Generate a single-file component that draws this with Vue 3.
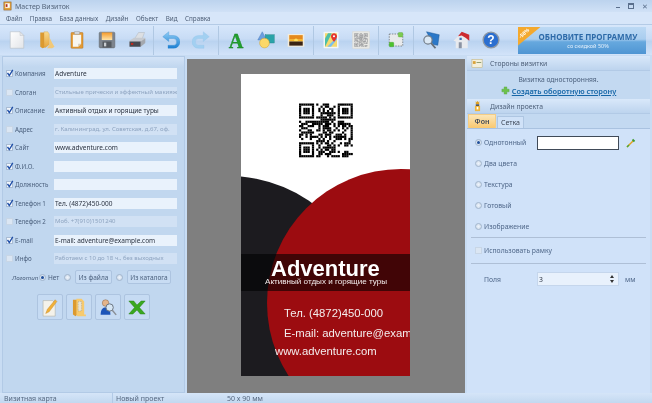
<template>
  <div class="app">
    <div class="titlebar">
      <svg class="title-icon" viewBox="0 0 10 10"><rect x="1" y=".5" width="8" height="9" fill="#e2a23c" stroke="#8a5a20" stroke-width=".6"/><rect x="2.500" y="2" width="5" height="5" fill="#fff"/><rect x="3" y="3" width="2" height="3" fill="#b03020"/></svg>
      <span>Мастер Визиток</span>
      <div class="win-btns">
        <i class="win-min"></i>
        <i class="win-max"></i>
        <span class="win-close">✕</span>
      </div>
    </div>

    <nav class="menu">
      <span v-for="m in menu" :key="m">{{ m }}</span>
    </nav>

    <div class="toolbar">
      <div class="tool-group first">
        <div class="tool">
          <svg viewBox="0 0 24 24"><defs><linearGradient id="pg" x1="0" y1="0" x2="1" y2="1"><stop offset="0" stop-color="#fff"/><stop offset="1" stop-color="#e2e4e8"/></linearGradient></defs><path d="M3 1h13l5 5v17H3z" fill="url(#pg)" stroke="#b4b8be" stroke-width=".7"/><path d="M16 1v5h5z" fill="#e4e6ea" stroke="#b4b8be" stroke-width=".5"/></svg>
        </div>
        <div class="tool">
          <svg viewBox="0 0 24 24"><defs><linearGradient id="fg" x1="0" y1="0" x2="0" y2="1"><stop offset="0" stop-color="#f9d98c"/><stop offset="1" stop-color="#e6a53c"/></linearGradient></defs><path d="M3 2h5l1 2v18l-3 1-3-2z" fill="#dc9a30"/><path d="M8 1h5l2 3v14l-5 4-2-1z" fill="url(#fg)" stroke="#cf9236" stroke-width=".4"/><path d="M15 8l4 8 3 5-3 2h-7l3-4z" fill="#f1c878"/></svg>
        </div>
        <div class="tool">
          <svg viewBox="0 0 24 24"><rect x="4" y="2" width="16" height="21" rx="1" fill="#e39a35" stroke="#b06f1c" stroke-width=".6"/><path d="M6.500 5h11v12l-4 4h-7z" fill="#f8f6f0"/><path d="M13.500 21l4-4h-4z" fill="#d4cfbf"/><rect x="8.500" y=".5" width="7" height="4" rx="1" fill="#d2d6da" stroke="#7c7f84" stroke-width=".5"/></svg>
        </div>
        <div class="tool">
          <svg viewBox="0 0 24 24"><defs><linearGradient id="sg" x1="0" y1="0" x2="0" y2="1"><stop offset="0" stop-color="#f59a2a"/><stop offset="1" stop-color="#fde3a8"/></linearGradient></defs><rect x="1.500" y="1.500" width="21" height="21" rx="1.500" fill="#7d848d" stroke="#5a6068" stroke-width=".6"/><rect x="5" y="2" width="14" height="10" fill="url(#sg)"/><rect x="6" y="14" width="12" height="8" fill="#54595f"/><rect x="8" y="15.500" width="3" height="5" fill="#c8ccd0"/></svg>
        </div>
        <div class="tool">
          <svg viewBox="0 0 24 24"><path d="M9 10l5-8h8l-3 8z" fill="#dcdfe3" stroke="#a2a7ad" stroke-width=".5"/><path d="M2 13l6-4h15v6l-6 5H2z" fill="#c6cad0"/><path d="M2 14h15v7H2z" fill="#454950"/><path d="M17 14l6-4v6l-6 5z" fill="#a4a8ae"/><rect x="4" y="16" width="3" height="2.500" fill="#c2281c"/></svg>
        </div>
      </div>
      <div class="tool-group">
        <div class="tool">
          <svg viewBox="0 0 24 24"><defs><linearGradient id="ug" x1="0" y1="0" x2="0" y2="1"><stop offset="0" stop-color="#8fcdf5"/><stop offset="1" stop-color="#1b7fd2"/></linearGradient></defs><path d="M9 1L1 7.500 9 14v-4h6a4 4 0 0 1 0 9H8v4h7.500a8 8 0 0 0 0-17H9z" fill="url(#ug)" stroke="#2b86cc" stroke-width=".4"/></svg>
        </div>
        <div class="tool">
          <svg viewBox="0 0 24 24"><path d="M15 1l8 6.500L15 14v-4H9a4 4 0 0 0 0 9h7v4H8.500a8 8 0 0 1 0-17H15z" fill="#a2d0f1" stroke="#90c3ea" stroke-width=".4"/></svg>
        </div>
      </div>
      <div class="tool-group">
        <div class="tool">
          <svg viewBox="0 0 24 24"><text x="12" y="22" text-anchor="middle" class="a-mark">A</text></svg>
        </div>
        <div class="tool">
          <svg viewBox="0 0 24 24"><path d="M7 1L1 12h12z" fill="#6b9fe0" stroke="#4370b4" stroke-width=".5"/><rect x="11" y="5" width="12" height="11" fill="#2aa3a8" stroke="#1c7c80" stroke-width=".5"/><circle cx="10" cy="16" r="6.500" fill="#fbd86a" stroke="#c99a26" stroke-width=".6"/></svg>
        </div>
        <div class="tool">
          <svg viewBox="0 0 24 24"><rect x="1" y="4" width="22" height="17" fill="#f3ecdb"/><rect x="3" y="5.500" width="18" height="6" fill="#e58a1c"/><rect x="3" y="11" width="18" height="3" fill="#f7b52a"/><circle cx="12" cy="12.500" r="2.500" fill="#ffe060"/><rect x="3" y="14" width="18" height="5.500" fill="#3a2414"/></svg>
        </div>
      </div>
      <div class="tool-group">
        <div class="tool">
          <svg viewBox="0 0 24 24"><rect x="2" y="1" width="20" height="22" rx="1" fill="#f4f6f4"/><rect x="4" y="3" width="16" height="18" fill="#f5d96e"/><path d="M4 21L13 3H8L4 10z" fill="#4cbfa8"/><path d="M12 21l8-10v-3l-13 13z" fill="#79c0ee"/><path d="M16 3c-2.500 0-4 2-4 4 0 3 4 7.500 4 7.500s4-4.500 4-7.500c0-2-1.500-4-4-4z" fill="#e3342f"/><circle cx="16" cy="7" r="1.400" fill="#fff"/></svg>
        </div>
        <div class="tool">
          <svg viewBox="0 0 54 54"><rect x="1" y="1" width="52" height="52" rx="3" fill="#e8e8e4" stroke="#cdcdc9"/><g fill="#7d7f82"><rect v-for="c in qrCells" :key="c.id" :x="7 + c.x * 1.6" :y="7 + c.y * 1.6" width="1.600" height="1.600"/></g></svg>
        </div>
      </div>
      <div class="tool-group">
        <div class="tool">
          <svg viewBox="0 0 24 24"><rect x="3" y="4" width="18" height="16" fill="#e8eaec" stroke="#5a5f66" stroke-width=".9" stroke-dasharray="2 1.500"/><rect x="15" y="2" width="6" height="6" rx="1" fill="#7ccb50" stroke="#48992c" stroke-width=".4"/><rect x="3" y="15" width="6" height="6" rx="1" fill="#4cc22e" stroke="#2f8f1a" stroke-width=".4"/></svg>
        </div>
      </div>
      <div class="tool-group last">
        <div class="tool">
          <svg viewBox="0 0 24 24"><path d="M6 1l17 4-2 14-6-1z" fill="#2b78c8" stroke="#1d5592" stroke-width=".6"/><circle cx="8" cy="12" r="5.500" fill="#dbe8f4" stroke="#737d88" stroke-width="1.600"/><path d="M12 16l6 7" stroke="#666f78" stroke-width="2.400"/></svg>
        </div>
        <div class="tool">
          <svg viewBox="0 0 24 24"><path d="M2 13l9-9 10 5v14H5v-9z" fill="#e8eaee"/><path d="M8 7l5-6 10 4v8l-5-4-5-3z" fill="#cc2a30"/><rect x="9" y="15" width="4" height="8" fill="#8a93a3"/><rect x="10" y="9" width="3" height="3" fill="#3d6fb3"/></svg>
        </div>
        <div class="tool">
          <svg viewBox="0 0 24 24"><circle cx="12" cy="12" r="10.500" fill="#2a6ed0" stroke="#8f98a2" stroke-width="1.800"/><text x="12" y="17.500" text-anchor="middle" class="help-mark">?</text></svg>
        </div>
      </div>
      <div class="promo">
        <div class="promo-flag"><span>-50%</span></div>
        <b>ОБНОВИТЕ ПРОГРАММУ</b>
        <small>со скидкой 50%</small>
      </div>
    </div>

    <div class="main">
      <aside class="left">
        <div class="fields">
          <template v-for="f in fields" :key="f.label">
            <label class="field-label">
              <span class="check" :class="{ on: f.on }"><svg v-if="f.on" viewBox="0 0 8 8"><path d="M1.500 4l1.800 2.500L6.800 .8" fill="none" stroke="#1e4ea8" stroke-width="1.300"/></svg></span>
              {{ f.label }}
            </label>
            <div class="field-input" :class="{ off: !f.on }">{{ f.value }}</div>
          </template>
        </div>
        <div class="logo-row">
          <span class="logo-title">Логотип</span>
          <span class="radio on"></span><span class="logo-opt">Нет</span>
          <span class="radio"></span><button class="small-btn">Из файла</button>
          <span class="radio"></span><button class="small-btn">Из каталога</button>
        </div>
        <div class="big-btns">
          <div class="big-btn">
            <svg viewBox="0 0 20 22"><path d="M2 3h11l3 3v15H2z" fill="#f4f2ea" stroke="#a9a79c" stroke-width=".6"/><path d="M5 18l2-5L16 2l2 2L9 16z" fill="#f0b03a" stroke="#b87c18" stroke-width=".4"/></svg>
          </div>
          <div class="big-btn">
            <svg viewBox="0 0 20 22"><path d="M3 2h5v17l-2 2-3-2z" fill="#dc9a30"/><path d="M7 1h6l3 3v15h2v2H8l-1-2z" fill="#f7ca6e"/><rect x="9" y="4" width="4" height="11" fill="#e8e2d2" stroke="#8a8474" stroke-width=".5" stroke-dasharray="1 1"/></svg>
          </div>
          <div class="big-btn">
            <svg viewBox="0 0 22 22"><circle cx="8" cy="5.500" r="4" fill="#e3b48a" stroke="#7a5030" stroke-width=".5"/><path d="M2 20c0-7 3-9 6-9s6 2 6 9z" fill="#1d55b8"/><circle cx="13" cy="11" r="4.500" fill="#d6e6f4" stroke="#6a7480" stroke-width="1.200"/><path d="M16 14l5 6" stroke="#8a8f96" stroke-width="1.800"/></svg>
          </div>
          <div class="big-btn">
            <svg viewBox="0 0 22 22"><path d="M1 3h6l4 5 5-5h5l-7 8 7 8h-6l-4-5-5 5H1l7-8z" fill="#3aa820" stroke="#1f7a10" stroke-width=".5"/></svg>
          </div>
        </div>
      </aside>

      <section class="stage">
        <div class="card">
          <svg class="card-bg" viewBox="0 0 169 302">
            <rect width="169" height="302" fill="#fff"/>
            <circle cx="-13" cy="247" r="145" fill="#1c1b1f"/>
            <circle cx="160" cy="229" r="134" fill="#9c0c10"/>
            <g transform="translate(58 29.500) scale(2.150)"><rect v-for="c in qrCells" :key="c.id" :x="c.x" :y="c.y" width="1.020" height="1.020" fill="#000"/></g>
          </svg>
          <div class="card-band"></div>
          <div class="card-name">Adventure</div>
          <div class="card-sub">Активный отдых и горящие туры</div>
          <div class="card-tel">Тел. (4872)450-000</div>
          <div class="card-mail">E-mail: adventure@example.com</div>
          <div class="card-web">www.adventure.com</div>
        </div>
      </section>

      <aside class="right">
        <div class="pane-head">
          <svg viewBox="0 0 14 12"><rect x="1" y="2" width="11" height="9" fill="#f3efdc" stroke="#b9a86a" stroke-width=".5"/><rect x="2" y="4" width="3" height="3" fill="#d9a23a"/><rect x="6" y="5" width="5" height="1" fill="#8a9a6a"/></svg>
          Стороны визитки
        </div>
        <div class="sides">
          <div>Визитка односторонняя.</div>
          <div class="create">
            <svg viewBox="0 0 10 10"><path d="M3.500 1h3v2.500H9v3H6.500V9h-3V6.500H1v-3h2.500z" fill="#6cc24a" stroke="#4a9a30" stroke-width=".4"/></svg>
            <a>Создать оборотную сторону</a>
          </div>
        </div>
        <div class="pane-head">
          <svg viewBox="0 0 14 14"><path d="M5 1l1 2 1-2 1 2 1-2v4H5z" fill="#e0a020"/><rect x="5" y="5" width="4" height="2" fill="#555"/><path d="M4 7h6v6H4z" fill="#f2b63a"/><rect x="6" y="8" width="2" height="3" fill="#fff"/></svg>
          Дизайн проекта
        </div>
        <div class="tabs">
          <span class="tab active">Фон</span>
          <span class="tab">Сетка</span>
        </div>
        <div class="design">
          <div class="opt first-opt">
            <span class="radio on"></span><span class="opt-name">Однотонный</span>
            <div class="color-box"></div>
            <svg class="pipette" viewBox="0 0 10 10"><path d="M1 9l6-6" stroke="#e0a020" stroke-width="1.400"/><path d="M1 9l2-2" stroke="#4aa83a" stroke-width="1.400"/><path d="M6.500 1.500l2 2" stroke="#3c9a30" stroke-width="1.800"/></svg>
          </div>
          <div class="opt"><span class="radio"></span>Два цвета</div>
          <div class="opt"><span class="radio"></span>Текстура</div>
          <div class="opt"><span class="radio"></span>Готовый</div>
          <div class="opt"><span class="radio"></span>Изображение</div>
          <div class="divider"></div>
          <div class="frame-row"><span class="check"></span>Использовать рамку</div>
          <div class="divider"></div>
          <div class="margin-row">
            <span class="margin-label">Поля</span>
            <div class="spin">3<span class="spin-arrows"><i class="up"></i><i class="down"></i></span></div>
            <span>мм</span>
          </div>
        </div>
      </aside>
    </div>

    <footer class="status">
      <span class="st1">Визитная карта</span>
      <span class="st2">Новый проект</span>
      <span>50 x 90 мм</span>
    </footer>
  </div>
</template>

<script setup>
import { computed } from 'vue'

const menu = ['Файл', 'Правка', 'База данных', 'Дизайн', 'Объект', 'Вид', 'Справка']

const fields = [
  { label: 'Компания', value: 'Adventure', on: true },
  { label: 'Слоган', value: 'Стильные прически и эффектный макияж', on: false },
  { label: 'Описание', value: 'Активный отдых и горящие туры', on: true },
  { label: 'Адрес', value: 'г. Калининград, ул. Советская, д.67, оф.', on: false },
  { label: 'Сайт', value: 'www.adventure.com', on: true },
  { label: 'Ф.И.О.', value: '', on: true },
  { label: 'Должность', value: '', on: true },
  { label: 'Телефон 1', value: 'Тел. (4872)450-000', on: true },
  { label: 'Телефон 2', value: 'Моб. +7(910)1501240', on: false },
  { label: 'E-mail', value: 'E-mail: adventure@example.com', on: true },
  { label: 'Инфо', value: 'Работаем с 10 до 18 ч., без выходных', on: false }
]

// 25x25 code: finder squares are fixed, the rest is a stable pseudo pattern
const qrCells = computed(() => {
  const size = 25
  const cells = []
  const finder = (x, y, ox, oy) => {
    const dx = x - ox
    const dy = y - oy
    if (dx < -1 || dy < -1 || dx > 7 || dy > 7) return null
    if (dx < 0 || dy < 0 || dx > 6 || dy > 6) return false
    if (dx === 0 || dy === 0 || dx === 6 || dy === 6) return true
    if (dx === 1 || dy === 1 || dx === 5 || dy === 5) return false
    return true
  }
  let seed = 7
  for (let y = 0; y < size; y++) {
    for (let x = 0; x < size; x++) {
      seed = (seed * 1103515245 + 12345) & 0x7fffffff
      let on = (seed >> 16) % 100 < 52
      for (const [ox, oy] of [[0, 0], [18, 0], [0, 18]]) {
        const r = finder(x, y, ox, oy)
        if (r !== null) on = r
      }
      if (on) cells.push({ id: x + '-' + y, x, y })
    }
  }
  return cells
})
</script>

<style>
html, body {
  margin: 0;
  background: #c4d9f1;
}
</style>

<style scoped>
.app {
  width: 652px;
  height: 403px;
  overflow: hidden;
  display: flex;
  flex-direction: column;
  background: #c4d9f1;
  font-family: "Noto Sans", "Liberation Sans", sans-serif;
  font-size: 6.5px;
  color: #4a5f7c;
  filter: blur(0.4px);
}

.titlebar {
  height: 12px;
  display: flex;
  align-items: center;
  padding: 0 4px 0 3px;
  gap: 3px;
  background: linear-gradient(#bcd3ee, #d0e1f6);
  color: #54657c;
  font-size: 7px;
}
.title-icon {
  width: 9px;
  height: 10px;
}
.win-btns {
  margin-left: auto;
  display: flex;
  align-items: center;
  gap: 8px;
  color: #5a6f8c;
}
.win-min {
  width: 4px;
  height: 1px;
  margin-top: 3px;
  background: #5a6f8c;
}
.win-max {
  width: 4px;
  height: 3px;
  border: 1px solid #5a6f8c;
  border-top-width: 2px;
}
.win-close {
  font-size: 7px;
  line-height: 7px;
}

.menu {
  height: 12px;
  display: flex;
  align-items: center;
  gap: 7.5px;
  padding-left: 6px;
  background: #d7e6f9;
  color: #4f6078;
  font-size: 6.3px;
}

.toolbar {
  height: 31px;
  display: flex;
  align-items: center;
  padding-left: 2px;
  border-top: 1px solid #b4cbe6;
  box-sizing: border-box;
  background: linear-gradient(#d7e7fb 0%, #c8dcf5 45%, #bad3f0 55%, #d2e3f9 100%);
}
.tool-group {
  display: flex;
  height: 29px;
  align-items: center;
  padding: 0 2px 0 2px;
  border-right: 1px solid #b0c8e3;
}
.tool-group.first {
  padding-left: 0;
  padding-right: 1px;
}
.tool-group.last {
  border-right: none;
}
.tool {
  width: 30px;
  display: flex;
  justify-content: center;
}
.tool svg {
  width: 18px;
  height: 18px;
}
.a-mark {
  fill: #22a02e;
  stroke: #157a1f;
  stroke-width: .4px;
  font: bold 27px "Liberation Serif", serif;
}
.help-mark {
  fill: #fff;
  font: bold 16px "Liberation Sans", sans-serif;
}
.promo {
  position: relative;
  width: 128px;
  height: 27px;
  margin-left: 10px;
  display: flex;
  flex-direction: column;
  align-items: center;
  justify-content: center;
  overflow: hidden;
  box-sizing: border-box;
  padding-left: 12px;
  background: linear-gradient(#bcd9f4 0, #a9cdef 45%, #66a8de 55%, #4f95d3);
  color: #2d6aa8;
}
.promo b {
  font-size: 8px;
  line-height: 11px;
  white-space: nowrap;
}
.promo small {
  font-size: 5.5px;
  line-height: 8px;
  color: #e4f0fb;
}
.promo-flag {
  position: absolute;
  left: 0;
  top: 0;
  width: 23px;
  height: 19px;
  background: #f4a92e;
  clip-path: polygon(0 0, 100% 0, 0 100%);
}
.promo-flag span {
  position: absolute;
  left: 0;
  top: 3px;
  font-size: 5px;
  font-weight: 700;
  color: #fff;
  transform: rotate(-42deg);
}

.main {
  flex: 1;
  min-height: 0;
  display: flex;
  padding: 1px 2px 0 2px;
  gap: 2px;
  background: #c8dcf3;
}

.left {
  width: 183px;
  box-sizing: border-box;
  padding-top: 11px;
  background: linear-gradient(#d3e3f7 0, #c1d7ef 10px);
  border: 1px solid #b2cae6;
  display: flex;
  flex-direction: column;
}
.fields {
  display: grid;
  grid-template-columns: 48px 123px;
  grid-auto-rows: 11px;
  row-gap: 7.5px;
  padding-left: 3px;
}
.field-label {
  display: flex;
  align-items: center;
  gap: 2px;
  white-space: nowrap;
  font-size: 6.2px;
}
.check {
  width: 7px;
  height: 7px;
  box-sizing: border-box;
  display: inline-block;
  flex: none;
  background: #dbe6f3;
  border: 1px solid #c8d6e6;
}
.check.on {
  background: #f2f6fb;
  border-color: #a9bcd4;
}
.check svg {
  display: block;
  width: 8px;
  height: 8px;
  margin: -2px 0 0 -1px;
}
.field-input {
  box-sizing: border-box;
  padding-left: 1px;
  line-height: 11px;
  background: #e9f2fc;
  color: #2a3240;
  white-space: nowrap;
  overflow: hidden;
}
.field-input.off {
  background: #d1e1f4;
  color: #8ea4c0;
  font-size: 6px;
}

.logo-row {
  display: flex;
  align-items: center;
  height: 14px;
  margin-top: 6px;
  padding-left: 9px;
  white-space: nowrap;
}
.logo-title {
  width: 27px;
  font-size: 6.2px;
  font-style: italic;
}
.radio {
  width: 7px;
  height: 7px;
  box-sizing: border-box;
  flex: none;
  display: inline-block;
  position: relative;
  border-radius: 50%;
  background: radial-gradient(#eef4fb, #c9d7e8);
  border: 1px solid #a3b6cd;
}
.radio.on::after {
  content: "";
  position: absolute;
  left: 1px;
  top: 1px;
  width: 3px;
  height: 3px;
  border-radius: 50%;
  background: #1f4f9c;
}
.logo-opt {
  width: 16px;
  margin-left: 2px;
}
.small-btn {
  height: 14px;
  padding: 0;
  margin: 0 4px;
  width: 37px;
  font: inherit;
  color: inherit;
  background: #c8dcf3;
  border: 1px solid #adc4e0;
  border-radius: 2px;
}
.small-btn:last-child {
  width: 44px;
}
.big-btns {
  display: flex;
  gap: 3px;
  margin: 10px 0 0 34px;
}
.big-btn {
  width: 26px;
  height: 26px;
  box-sizing: border-box;
  display: flex;
  align-items: center;
  justify-content: center;
  background: #c6dbf3;
  border: 1px solid #adc4e0;
  border-radius: 2px;
}
.big-btn svg {
  width: 18px;
  height: 19px;
}

.stage {
  width: 278px;
  margin-top: 3px;
  padding: 0 1px 2px 0;
  box-sizing: border-box;
  display: flex;
  align-items: center;
  justify-content: center;
  background: #7f7f7f;
}
.card {
  position: relative;
  width: 169px;
  height: 302px;
  overflow: hidden;
  font-family: "Liberation Sans", Arial, sans-serif;
  color: #fff;
}
.card-bg {
  position: absolute;
  left: 0;
  top: 0;
  width: 169px;
  height: 302px;
}
.card-band {
  position: absolute;
  left: 0;
  top: 180px;
  width: 100%;
  height: 37px;
  background: rgba(0, 0, 0, .58);
}
.card-name,
.card-sub,
.card-tel,
.card-mail,
.card-web {
  position: absolute;
  white-space: nowrap;
  color: #f4eded;
}
.card-name {
  left: 30px;
  top: 187px;
  font-size: 22px;
  line-height: 16px;
  font-weight: 700;
  color: #fff;
}
.card-sub {
  left: 24px;
  top: 203px;
  font-size: 8.1px;
  line-height: 10px;
}
.card-tel {
  left: 43px;
  top: 231px;
  font-size: 11.3px;
  line-height: 16px;
}
.card-mail {
  left: 43px;
  top: 251px;
  font-size: 11.3px;
  line-height: 16px;
}
.card-web {
  left: 34px;
  top: 269px;
  font-size: 11.3px;
  line-height: 16px;
}

.right {
  width: 183px;
  display: flex;
  flex-direction: column;
  background: #c3d9f1;
}
.pane-head {
  height: 14px;
  display: flex;
  align-items: center;
  gap: 6px;
  padding-left: 4px;
  font-size: 6.8px;
  color: #4d5f78;
  background: linear-gradient(#d9e8fa, #bdd4ee);
  border-bottom: 1px solid #b2cae6;
}
.pane-head svg {
  width: 13px;
  height: 12px;
}
.sides {
  height: 28px;
  display: flex;
  flex-direction: column;
  align-items: center;
  justify-content: center;
  gap: 2px;
  font-size: 6.7px;
}
.create {
  display: flex;
  align-items: center;
  gap: 2px;
}
.create svg {
  width: 9px;
  height: 9px;
}
.create a {
  color: #1767a8;
  font-size: 7.4px;
  font-weight: 600;
  text-decoration: underline;
}
.tabs {
  height: 14px;
  display: flex;
  align-items: flex-end;
  padding-left: 1px;
  border-bottom: 1px solid #a9c2e0;
}
.tab {
  height: 11px;
  padding: 0 3px;
  line-height: 11px;
  font-size: 7px;
  color: #3d4757;
  background: #d0e2f8;
  border: 1px solid #aec6e2;
  border-bottom: none;
  margin-left: 1px;
}
.tab.active {
  width: 20px;
  height: 13px;
  padding: 0 3px;
  text-align: center;
  line-height: 13px;
  border: 1px solid #f4cd86;
  border-bottom: none;
  font-weight: 600;
  background: linear-gradient(#fce6b8, #f9c870);
  margin-left: 0;
}
.design {
  flex: 1;
  background: #d0e2f9;
  padding: 0 4px;
  font-size: 6.8px;
  color: #4f6789;
}
.opt {
  height: 21px;
  display: flex;
  align-items: center;
  gap: 2px;
  padding-left: 4px;
  white-space: nowrap;
}
.first-opt {
  margin-top: 3px;
}
.opt-name {
  width: 51px;
}
.color-box {
  width: 82px;
  height: 14px;
  box-sizing: border-box;
  background: #fff;
  border: 1px solid #404a58;
}
.pipette {
  width: 10px;
  height: 10px;
  margin-left: 5px;
}
.divider {
  height: 1px;
  background: #aebfd6;
}
.frame-row {
  height: 25px;
  display: flex;
  align-items: center;
  gap: 2px;
  padding-left: 4px;
}
.margin-row {
  height: 30px;
  display: flex;
  align-items: center;
  padding-left: 13px;
}
.margin-label {
  width: 53px;
}
.spin {
  width: 82px;
  height: 14px;
  box-sizing: border-box;
  display: flex;
  align-items: center;
  justify-content: space-between;
  padding: 0 4px 0 1px;
  margin-right: 6px;
  background: #e8f1fc;
  color: #2a3240;
  border: 1px solid #c5d6ec;
}
.spin-arrows {
  display: flex;
  flex-direction: column;
  gap: 2px;
}
.spin-arrows i {
  width: 0;
  height: 0;
  border-left: 2px solid transparent;
  border-right: 2px solid transparent;
}
.spin-arrows .up {
  border-bottom: 3px solid #333;
}
.spin-arrows .down {
  border-top: 3px solid #333;
}

.status {
  height: 10px;
  display: flex;
  align-items: flex-start;
  padding-left: 4px;
  font-size: 7px;
  line-height: 11px;
  color: #566880;
  background: linear-gradient(#d5e5f8, #c2d8f0);
}
.st1 {
  width: 108px;
  height: 10px;
  border-right: 1px solid #b2cae6;
}
.st2 {
  width: 111px;
  padding-left: 3px;
}
</style>
